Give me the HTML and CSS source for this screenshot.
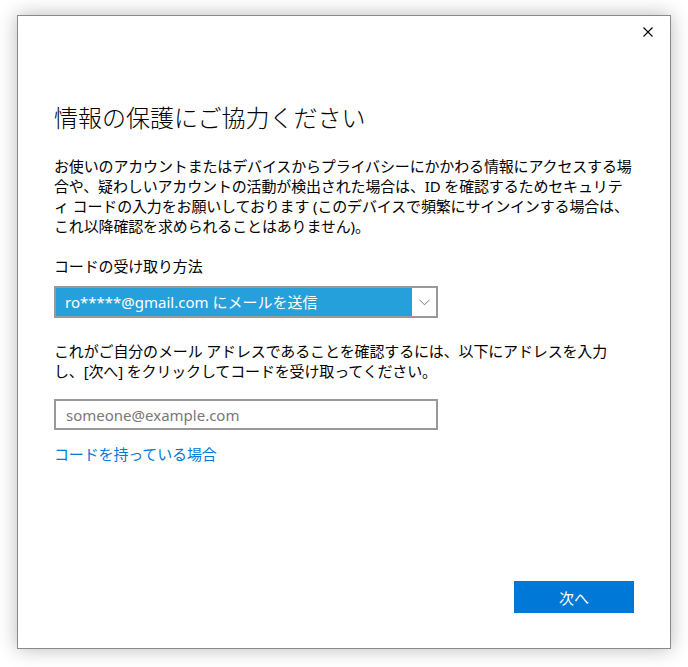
FILE: index.html
```html
<!DOCTYPE html>
<html lang="ja">
<head>
<meta charset="utf-8">
<title>情報の保護にご協力ください</title>
<link rel="stylesheet" href="styles.css">
</head>
<body>
<div class="window">
  <div class="titlebar">
    <button class="close" aria-label="閉じる">
      <svg width="10" height="10" viewBox="0 0 10 10"><path d="M0.5 0.5 L9.5 9.5 M9.5 0.5 L0.5 9.5" stroke="#000" stroke-width="1.1" fill="none"/></svg>
    </button>
  </div>
  <div class="content">
    <h1 class="title">情報の保護にご協力ください</h1>
    <p class="para intro">お使いのアカウントまたはデバイスからプライバシーにかかわる情報にアクセスする場<br>合や、疑わしいアカウントの活動が検出された場合は、ID を確認するためセキュリテ<br>ィ コードの入力をお願いしております (このデバイスで頻繁にサインインする場合は、<br>これ以降確認を求められることはありません)。</p>
    <p class="para label">コードの受け取り方法</p>
    <div class="select">
      <div class="select-value">ro*****@gmail.com にメールを送信</div>
      <div class="select-arrow">
        <svg width="11" height="7" viewBox="0 0 11 7"><path d="M0.5 0.8 L5.5 5.8 L10.5 0.8" stroke="#777" stroke-width="1" fill="none"/></svg>
      </div>
    </div>
    <p class="para confirm">これがご自分のメール アドレスであることを確認するには、以下にアドレスを入力<br>し、[次へ] をクリックしてコードを受け取ってください。</p>
    <div class="field"><span class="placeholder">someone@example.com</span></div>
    <a class="link" href="#">コードを持っている場合</a>
    <div class="footer">
      <button class="next">次へ</button>
    </div>
  </div>
</div>
</body>
</html>
```

FILE: styles.css
```css
html, body {
  margin: 0;
  padding: 0;
  background: #ffffff;
}

body {
  font-family: "Noto Sans", "Noto Sans CJK JP", sans-serif;
  color: #000;
  width: 688px;
  height: 667px;
  overflow: hidden;
}

.window {
  box-sizing: border-box;
  width: 654px;
  height: 634px;
  margin: 15px 0 0 17px;
  background: #fff;
  border: 1px solid #8a8a8a;
  box-shadow: 0 0 18px rgba(0, 0, 0, 0.28);
  display: flex;
  flex-direction: column;
}

.titlebar {
  height: 32px;
  display: flex;
  justify-content: flex-end;
  align-items: center;
  padding-right: 17px;
}

.close {
  border: 0;
  background: transparent;
  padding: 0;
  width: 10px;
  height: 10px;
  display: flex;
}

.content {
  flex: 1;
  display: flex;
  flex-direction: column;
  align-items: flex-start;
  padding: 0 36px 35px 36px;
}

.title {
  margin: 53px 0 0 0;
  font-family: "Noto Sans CJK JP", sans-serif;
  font-weight: 300;
  font-size: 24px;
  line-height: 32px;
  letter-spacing: 0;
  white-space: nowrap;
}

.para {
  margin: 0;
  font-size: 15px;
  line-height: 20px;
  letter-spacing: -0.15px;
  white-space: nowrap;
}

.intro {
  margin-top: 23px;
}

.label {
  margin-top: 20px;
}

.select {
  box-sizing: border-box;
  margin-top: 10px;
  width: 384px;
  height: 32px;
  border: 2px solid #999;
  display: flex;
}

.select-value {
  flex: 1;
  background: #26a0da;
  color: #fff;
  font-size: 15px;
  line-height: 28px;
  padding-left: 9px;
  white-space: nowrap;
}

.select-arrow {
  width: 24px;
  display: flex;
  align-items: center;
  justify-content: center;
  background: #fff;
}

.confirm {
  margin-top: 23px;
}

.field {
  box-sizing: border-box;
  margin-top: 18px;
  width: 384px;
  height: 31px;
  border: 2px solid #999;
  padding-left: 10px;
  display: flex;
  align-items: center;
}

.placeholder {
  color: #777;
  font-size: 15px;
}

.link {
  margin-top: 14px;
  color: #0078d7;
  font-size: 15px;
  line-height: 20px;
  text-decoration: none;
  letter-spacing: -0.15px;
}

.footer {
  margin-top: auto;
  align-self: stretch;
  display: flex;
  justify-content: flex-end;
}

.next {
  width: 120px;
  height: 32px;
  border: 0;
  background: #0078d7;
  color: #fff;
  font-family: "Noto Sans CJK JP", sans-serif;
  font-size: 15px;
  padding: 0;
}
```
